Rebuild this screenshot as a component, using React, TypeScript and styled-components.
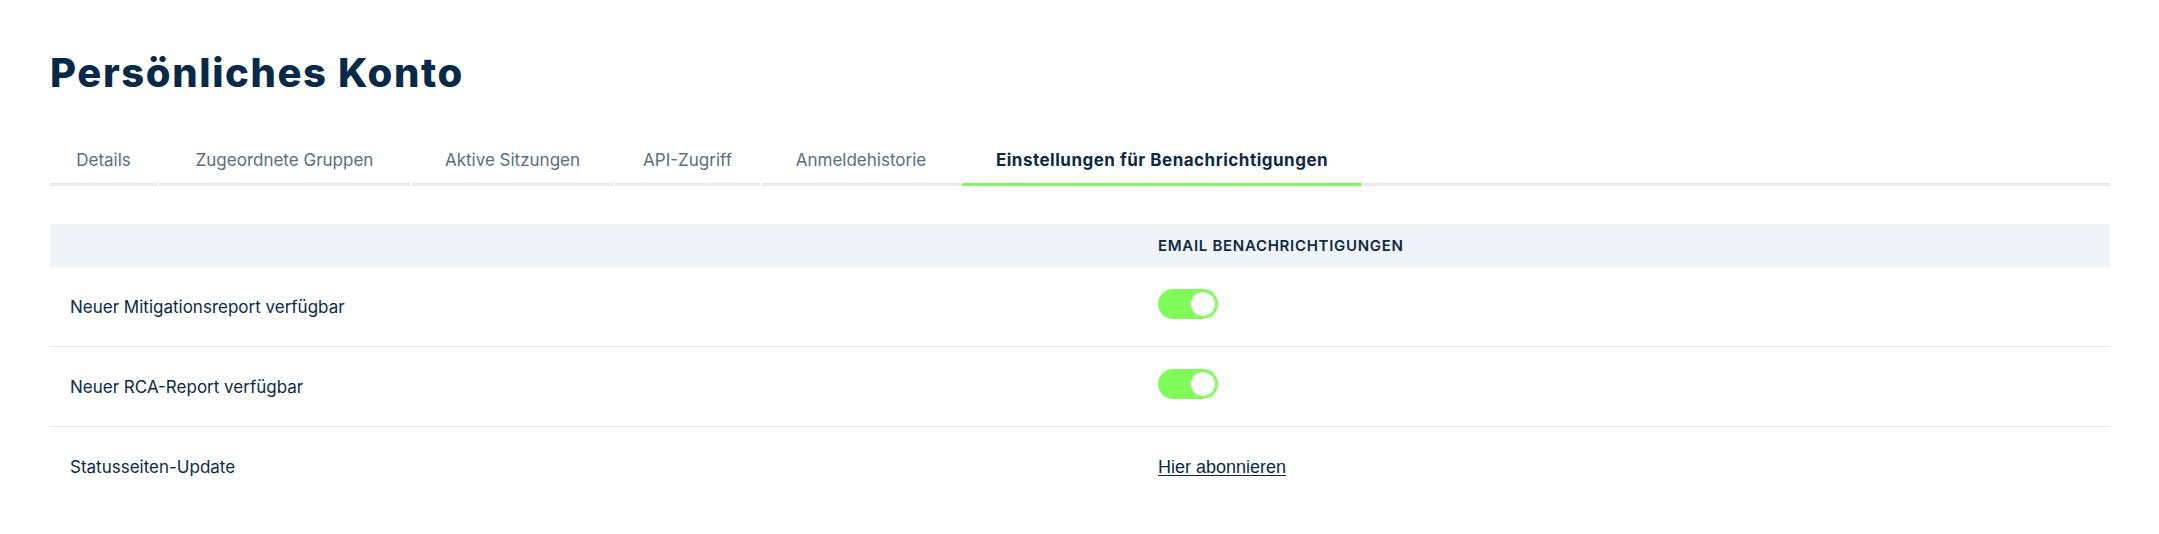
import styled, { createGlobalStyle } from 'styled-components'
import { useState } from 'react'

const GlobalStyle = createGlobalStyle`
  html, body {
    margin: 0;
    padding: 0;
    background: #ffffff;
  }
  body {
    font-family: Inter, "Noto Sans", sans-serif;
    color: #0b2a46;
  }
  * {
    box-sizing: border-box;
  }
`

const Page = styled.div`
  padding: 49px 49px 0 50px;
`

const Title = styled.h1`
  margin: 0;
  font-family: Inter, "Noto Sans", sans-serif;
  font-size: 40px;
  line-height: 48px;
  font-weight: 800;
  letter-spacing: 1.6px;
  color: #062a48;
`

const TabBar = styled.div`
  display: flex;
  gap: 2px;
  margin-top: 40px;
`

const Tab = styled.button<{ $width: number; $active?: boolean }>`
  flex: 0 0 ${p => p.$width}px;
  display: flex;
  justify-content: center;
  align-items: center;
  padding: 11px 0 11px;
  background: none;
  border: none;
  border-bottom: 3px solid ${p => (p.$active ? '#7ef95a' : '#e6eaef')};
  font-family: Inter, "Noto Sans", sans-serif;
  font-size: 17px;
  line-height: 24px;
  font-weight: ${p => (p.$active ? 700 : 400)};
  letter-spacing: ${p => (p.$active ? '0.5px' : '0')};
  color: ${p => (p.$active ? '#0b2a46' : '#5a6d80')};
  cursor: pointer;
  white-space: nowrap;
`

const TabFiller = styled.div`
  flex: 1;
  border-bottom: 3px solid #e6eaef;
`

const Table = styled.div`
  margin-top: 38px;
  display: grid;
  grid-template-columns: 1088px 1fr;
`

const HeadCell = styled.div`
  height: 43px;
  background: #f0f4f8;
  display: flex;
  align-items: center;
  padding: 0 20px;
  font-family: Inter, "Noto Sans", sans-serif;
  font-size: 15px;
  font-weight: 600;
  letter-spacing: 0.7px;
  color: #0b2a46;
`

const Cell = styled.div<{ $last?: boolean }>`
  height: 80px;
  display: flex;
  align-items: center;
  padding: 0 20px;
  border-bottom: ${p => (p.$last ? 'none' : '1px solid #e6e6e6')};
  font-family: Inter, "Noto Sans", sans-serif;
  font-size: 17px;
  color: #0b2a46;
`

const Switch = styled.button<{ $on: boolean }>`
  position: relative;
  width: 60px;
  height: 30px;
  margin-top: -6px;
  border: none;
  border-radius: 15px;
  padding: 0;
  background: ${p => (p.$on ? '#80fc58' : '#d5dbe2')};
  cursor: pointer;

  &::after {
    content: '';
    position: absolute;
    top: 3px;
    left: ${p => (p.$on ? '33px' : '3px')};
    width: 24px;
    height: 24px;
    border-radius: 50%;
    background: #ffffff;
  }
`

const Link = styled.a`
  font-family: "Liberation Sans", Arial, sans-serif;
  font-size: 18px;
  color: #0b2a46;
  text-decoration: underline;
  text-underline-offset: 2px;
`

const tabs = [
  { label: 'Details', width: 107 },
  { label: 'Zugeordnete Gruppen', width: 251 },
  { label: 'Aktive Sitzungen', width: 201 },
  { label: 'API-Zugriff', width: 145 },
  { label: 'Anmeldehistorie', width: 198 },
  { label: 'Einstellungen für Benachrichtigungen', width: 400 },
]

export default function App() {
  const [active, setActive] = useState(5)
  const [mitigation, setMitigation] = useState(true)
  const [rca, setRca] = useState(true)

  return (
    <Page>
      <GlobalStyle />
      <Title>Persönliches Konto</Title>

      <TabBar>
        {tabs.map((t, i) => (
          <Tab key={t.label} $width={t.width} $active={i === active} onClick={() => setActive(i)}>
            {t.label}
          </Tab>
        ))}
        <TabFiller />
      </TabBar>

      <Table>
        <HeadCell />
        <HeadCell>EMAIL BENACHRICHTIGUNGEN</HeadCell>

        <Cell>Neuer Mitigationsreport verfügbar</Cell>
        <Cell>
          <Switch $on={mitigation} onClick={() => setMitigation(!mitigation)} />
        </Cell>

        <Cell>Neuer RCA-Report verfügbar</Cell>
        <Cell>
          <Switch $on={rca} onClick={() => setRca(!rca)} />
        </Cell>

        <Cell $last>Statusseiten-Update</Cell>
        <Cell $last>
          <Link href="#">Hier abonnieren</Link>
        </Cell>
      </Table>
    </Page>
  )
}
